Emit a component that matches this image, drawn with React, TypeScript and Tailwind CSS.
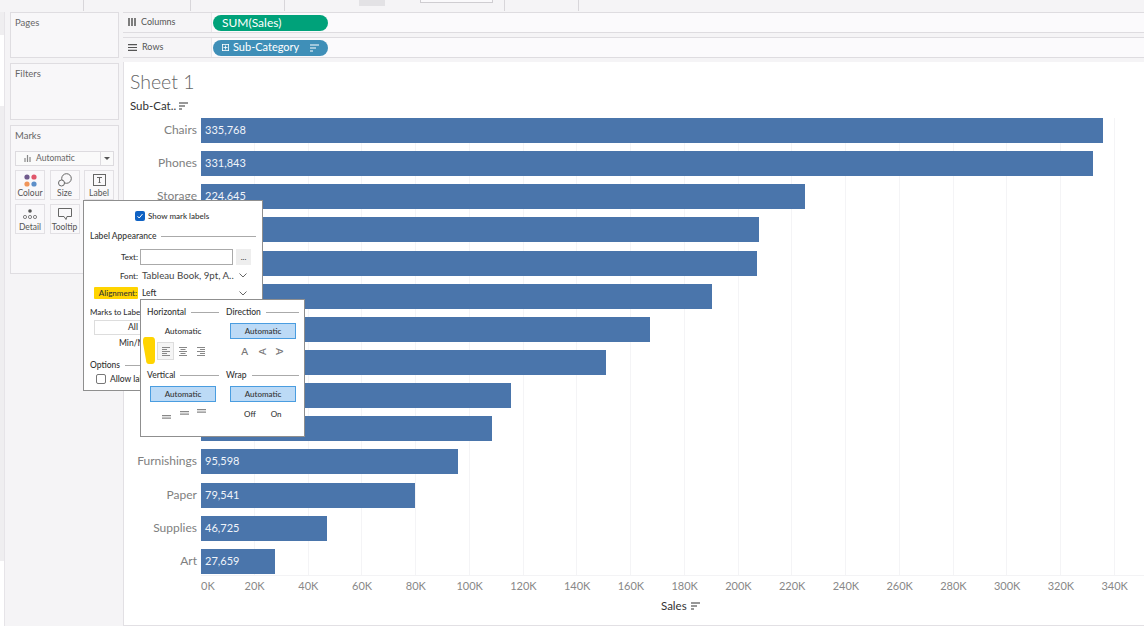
const BAR_SCALE = 53.75 / 20000;

const rows = [
  { name: 'Chairs', value: 335768, label: '335,768' },
  { name: 'Phones', value: 331843, label: '331,843' },
  { name: 'Storage', value: 224645, label: '224,645' },
  { name: '', value: 207600, label: '' },
  { name: '', value: 206800, label: '' },
  { name: '', value: 190000, label: '' },
  { name: '', value: 167100, label: '' },
  { name: '', value: 150700, label: '' },
  { name: '', value: 115400, label: '' },
  { name: '', value: 108300, label: '' },
  { name: 'Furnishings', value: 95598, label: '95,598' },
  { name: 'Paper', value: 79541, label: '79,541' },
  { name: 'Supplies', value: 46725, label: '46,725' },
  { name: 'Art', value: 27659, label: '27,659' },
];

const ticks = Array.from({ length: 18 }, (_, i) => `${i * 20}K`);

function SortIcon({ className = 'text-[#444]' }: { className?: string }) {
  return (
    <svg width="9" height="8" viewBox="0 0 9 8" className={className}>
      <path d="M0 1h9M0 4h6M0 7h3" stroke="currentColor" strokeWidth="1.2" />
    </svg>
  );
}

function Chevron() {
  return (
    <svg width="8" height="5" viewBox="0 0 8 5" className="text-[#666]">
      <path d="M.5.5 4 4 7.5.5" fill="none" stroke="currentColor" />
    </svg>
  );
}

function AlignIcon({ kind }: { kind: 'left' | 'center' | 'right' }) {
  const short = kind === 'left' ? 'M0 2.5h5M0 6.5h5' : kind === 'center' ? 'M1.5 2.5h5M1.5 6.5h5' : 'M3 2.5h5M3 6.5h5';
  return (
    <svg width="8" height="9" viewBox="0 0 8 9" className="text-[#888]">
      <path d={`M0 .5h8M0 4.5h8M0 8.5h8 ${short}`} stroke="currentColor" strokeWidth="1" />
    </svg>
  );
}

function VAlignIcon() {
  return (
    <svg width="9" height="4" viewBox="0 0 9 4" className="text-[#888]">
      <path d="M0 .7h9M0 3.2h9" stroke="currentColor" strokeWidth="1.3" />
    </svg>
  );
}

function SideCard({ title, className, children }: { title: string; className: string; children?: React.ReactNode }) {
  return (
    <div className={`border border-[#dfdde1] bg-[#f8f7f9] px-[4px] pt-[3px] ${className}`}>
      <div className="h-[13px] text-[9.5px] leading-[13px] text-[#666]">{title}</div>
      {children}
    </div>
  );
}

function MarkButton({ label, children }: { label: string; children: React.ReactNode }) {
  return (
    <div className="flex h-[30px] w-[30px] flex-col items-center border border-[#e2e0e4] bg-[#f9f8fa]">
      <div className="flex h-[17px] items-center pt-[1px]">{children}</div>
      <div className="whitespace-nowrap text-[8.5px] leading-[10px] text-[#555]">{label}</div>
    </div>
  );
}

function Shelf({ icon, label, children }: { icon: React.ReactNode; label: string; children: React.ReactNode }) {
  return (
    <div className="flex h-[21px] border-y border-[#dedce0] bg-[#fbfafc]">
      <div className="flex w-[89px] items-center gap-[5px] border-r border-[#e8e6ea] bg-[#f6f5f7] pb-[1px] pl-[5px] text-[9px] text-[#555]">
        {icon}
        {label}
      </div>
      <div className="flex items-center pl-[1px]">{children}</div>
    </div>
  );
}

function SectionHead({ title, className = '' }: { title: string; className?: string }) {
  return (
    <div className={`flex items-center gap-[5px] ${className}`}>
      <span className="whitespace-nowrap text-[8.5px] font-medium leading-[12px] text-[#333]">{title}</span>
      <div className="h-px flex-1 bg-[#aaa]" />
    </div>
  );
}

function BlueButton() {
  return (
    <div className="flex h-[16px] w-[66px] items-center justify-center border border-[#4a9de0] bg-[#bcdaf6] text-[8px] font-medium text-[#333]">
      Automatic
    </div>
  );
}

function FormRow({ label, highlight, className = 'h-[19px]', children }: { label: string; highlight?: boolean; className?: string; children: React.ReactNode }) {
  return (
    <div className={`flex items-center ${className}`}>
      <div className="flex w-[48px] justify-end">
        <span className={`whitespace-nowrap text-[8px] font-medium leading-[12px] text-[#333] ${highlight ? 'rounded-[1px] bg-[#ffd400] pr-[1px] pl-[5px]' : ''}`}>
          {label}
        </span>
      </div>
      {children}
    </div>
  );
}

function LabelPopover() {
  return (
    <div className="absolute top-[200px] left-[83px] h-[191px] w-[180px] border border-[#8f8f8f] bg-white px-[6px] text-[#333]">
      <div className="flex h-[29px] items-center pt-[1px] pl-[45px]">
        <div className="flex h-[10px] w-[10px] items-center justify-center rounded-[2px] bg-[#0f62c4]">
          <svg width="8" height="8" viewBox="0 0 8 8">
            <path d="M1.5 4.2 3.2 6l3.3-4" fill="none" stroke="white" strokeWidth="1" />
          </svg>
        </div>
        <span className="ml-[3px] text-[8px] font-medium">Show mark labels</span>
      </div>
      <SectionHead title="Label Appearance" className="h-[12px]" />
      <div className="mt-[5px]">
        <FormRow label="Text:">
          <div className="ml-[2px] h-[16px] w-[93px] border border-[#aaa]" />
          <div className="ml-[3px] flex h-[16px] w-[15px] items-center justify-center bg-[#eee] text-[8px] leading-none">...</div>
        </FormRow>
        <FormRow label="Font:">
          <div className="ml-[4px] flex w-[107px] items-center justify-between pr-[2px] text-[9.7px] text-[#444]">
            <span className="whitespace-nowrap">Tableau Book, 9pt, A..</span>
            <Chevron />
          </div>
        </FormRow>
        <FormRow label="Alignment:" highlight className="h-[16px]">
          <div className="ml-[4px] flex w-[107px] items-center justify-between pr-[2px] text-[8.5px] font-medium">
            <span>Left</span>
            <Chevron />
          </div>
        </FormRow>
      </div>
      <div className="mt-[5px] text-[8px] font-medium leading-[12px] whitespace-nowrap">Marks to Label</div>
      <div className="mt-[2px] ml-[4px] flex h-[15px] w-[60px] items-center justify-center border border-[#ddd] pl-[18px] text-[8.5px] font-medium">All</div>
      <div className="mt-[2px] pl-[29px] text-[8.5px] font-medium leading-[12px]">Min/M</div>
      <SectionHead title="Options" className="mt-[10px]" />
      <div className="mt-[2px] flex items-center pl-[6px]">
        <div className="h-[10px] w-[10px] rounded-[2px] border border-[#777]" />
        <span className="ml-[4px] text-[8.5px] font-medium">Allow lab</span>
      </div>
    </div>
  );
}

function AlignmentPopover() {
  return (
    <div className="absolute top-[299px] left-[140px] h-[138px] w-[165px] border border-[#8f8f8f] bg-white pt-[6px] pr-[5px] pl-[6px] text-[#333]">
      <div className="flex gap-[13px]">
        <div className="w-[66px]">
          <SectionHead title="Horizontal" className="w-[72px]" />
          <div className="mt-[5px] ml-[3px] flex h-[16px] w-[66px] items-center justify-center text-[8px] font-medium">Automatic</div>
          <div className="mt-[3px] ml-[10px] flex h-[18px] items-center">
            <div className="flex h-[18px] w-[17px] items-center justify-center border border-[#ddd] bg-[#f5f5f5]">
              <AlignIcon kind="left" />
            </div>
            <div className="flex w-[18px] justify-center"><AlignIcon kind="center" /></div>
            <div className="flex w-[17px] justify-center"><AlignIcon kind="right" /></div>
          </div>
        </div>
        <div className="flex-1">
          <SectionHead title="Direction" />
          <div className="mt-[5px] ml-[4px]"><BlueButton /></div>
          <div className="mt-[3px] ml-[10px] flex h-[18px] items-center text-[10px] font-semibold text-[#777]">
            <span className="w-[17.5px] text-center">A</span>
            <span className="w-[17.5px] -rotate-90 text-center">A</span>
            <span className="w-[17.5px] rotate-90 text-center">A</span>
          </div>
        </div>
      </div>
      <div className="mt-[9px] flex gap-[13px]">
        <div className="w-[66px]">
          <SectionHead title="Vertical" className="w-[72px]" />
          <div className="mt-[5px] ml-[3px]"><BlueButton /></div>
          <div className="mt-[4px] ml-[15px] flex h-[13px] items-start gap-[8.5px]">
            <div className="pt-[9px]"><VAlignIcon /></div>
            <div className="pt-[5px]"><VAlignIcon /></div>
            <div className="pt-[3px]"><VAlignIcon /></div>
          </div>
        </div>
        <div className="flex-1">
          <SectionHead title="Wrap" />
          <div className="mt-[5px] ml-[4px]"><BlueButton /></div>
          <div className="mt-[6px] ml-[18px] flex gap-[15px] text-[8px] font-medium leading-[12px]">
            <span>Off</span>
            <span>On</span>
          </div>
        </div>
      </div>
    </div>
  );
}

export default function App() {
  return (
    <div className="relative flex h-[626px] w-[1144px] flex-col overflow-hidden bg-[#f5f4f6] font-['Lato','Open_Sans',sans-serif]">
      <div className="flex h-[12px] shrink-0 pb-[1px]">
        <div className="w-[84px] border-r border-[#d8d6da]" />
        <div className="w-[107px] border-r border-[#d8d6da]" />
        <div className="w-[94px] border-r border-[#d8d6da]" />
        <div className="h-[6px] w-[74px]" />
        <div className="h-[6px] w-[26px] bg-[#e3e2e5]" />
        <div className="w-[35px]" />
        <div className="h-[3px] w-[73px] border-x border-b border-[#cfcdd1] bg-[#faf9fb]" />
        <div className="w-[12px] border-r border-[#d8d6da]" />
        <div className="w-[74px] border-r border-[#d8d6da]" />
      </div>

      <div className="flex flex-1">
        <div className="flex w-[5px] flex-col border-r border-[#e6e4e8] bg-white">
          <div className="h-[23px] bg-[#efeef0]" />
          <div className="h-[71px]" />
          <div className="h-[455px] bg-[#efeef0]" />
        </div>
        <div className="ml-[5px] flex w-[109px] shrink-0 flex-col gap-[5px]">
          <SideCard title="Pages" className="h-[46px]" />
          <SideCard title="Filters" className="h-[57px]" />
          <SideCard title="Marks" className="h-[149px]">
            <div className="mt-[9px] flex h-[15px] items-center border border-[#dddbdf] bg-[#fafafa] pl-[8px] text-[8.5px] text-[#666]">
              <svg width="7" height="7" viewBox="0 0 7 7" className="mr-[5px] text-[#888]">
                <path d="M1 3v4M3.5 0v7M6 2v5" stroke="currentColor" strokeWidth="1.2" />
              </svg>
              <span className="flex-1">Automatic</span>
              <div className="flex h-full w-[13px] items-center justify-center border-l border-[#dddbdf]">
                <div className="h-0 w-0 border-x-[3px] border-t-[3px] border-x-transparent border-t-[#555]" />
              </div>
            </div>
            <div className="mt-[4px] grid grid-cols-[30px_30px_30px] justify-between gap-y-[4px]">
              <MarkButton label="Colour">
                <svg width="13" height="13" viewBox="0 0 13 13">
                  <circle cx="3" cy="3" r="2.6" fill="#6f5a8c" />
                  <circle cx="10" cy="3" r="2.6" fill="#e0566b" />
                  <circle cx="3" cy="10" r="2.6" fill="#f0955a" />
                  <circle cx="10" cy="10" r="2.6" fill="#5d8fc9" />
                </svg>
              </MarkButton>
              <MarkButton label="Size">
                <svg width="14" height="14" viewBox="0 0 14 14" fill="none" stroke="#666">
                  <circle cx="8.5" cy="5.5" r="4.8" />
                  <circle cx="3.5" cy="10" r="3" fill="#f9f8fa" />
                </svg>
              </MarkButton>
              <MarkButton label="Label">
                <svg width="13" height="12" viewBox="0 0 13 12" fill="none" stroke="#666">
                  <rect x=".5" y=".5" width="12" height="11" />
                  <path d="M4 3.5h5M6.5 3.5v5M5.5 8.5h2" />
                </svg>
              </MarkButton>
              <MarkButton label="Detail">
                <svg width="14" height="11" viewBox="0 0 14 11" fill="none" stroke="#666" strokeWidth=".8">
                  <circle cx="7" cy="2" r="1.8" fill="#555" stroke="none" />
                  <circle cx="2" cy="8" r="1.6" />
                  <circle cx="7" cy="8" r="1.6" />
                  <circle cx="12" cy="8" r="1.6" />
                </svg>
              </MarkButton>
              <MarkButton label="Tooltip">
                <svg width="14" height="12" viewBox="0 0 14 12" fill="none" stroke="#666">
                  <path d="M.5.5h13v8H9l-1 3-2-3H.5z" />
                </svg>
              </MarkButton>
            </div>
          </SideCard>
        </div>

        <div className="ml-[4px] flex min-w-0 flex-1 flex-col">
          <div className="flex flex-col gap-[4px]">
            <Shelf
              label="Columns"
              icon={
                <svg width="8" height="8" viewBox="0 0 8 8" className="text-[#555]">
                  <path d="M1 0v8M4 0v8M7 0v8" stroke="currentColor" strokeWidth="1.5" />
                </svg>
              }
            >
              <div className="flex h-[16px] w-[115px] items-center rounded-full bg-[#00a27a] pl-[9px] text-[12px] text-white">SUM(Sales)</div>
            </Shelf>
            <Shelf
              label="Rows"
              icon={
                <svg width="9" height="7" viewBox="0 0 9 7" className="text-[#555]">
                  <path d="M0 .7h9M0 3.5h9M0 6.3h9" stroke="currentColor" strokeWidth="1.2" />
                </svg>
              }
            >
              <div className="flex h-[16px] w-[115px] items-center rounded-full bg-[#3f8fb8] pl-[9px] text-[11px] text-white">
                <svg width="7" height="7" viewBox="0 0 7 7" fill="none" stroke="white" strokeWidth=".8" className="mr-[4px]">
                  <rect x=".4" y=".4" width="6.2" height="6.2" />
                  <path d="M1.5 3.5h4M3.5 1.5v4" />
                </svg>
                <span>Sub-Category</span>
                <SortIcon className="ml-[11px] text-white" />
              </div>
            </Shelf>
          </div>

          <div className="mt-[4px] flex h-[564px] flex-col border-b border-l border-[#e2e0e4] bg-white">
            <div className="flex h-[34px] items-end pl-[6px] text-[19.5px] leading-[28px] font-light text-[#666]">Sheet 1</div>
            <div className="flex h-[18px] items-center pt-[2px] pl-[6px] text-[11.5px] text-[#333]">
              Sub-Cat..
              <SortIcon className="ml-[3px] text-[#333]" />
            </div>
            <div className="relative mt-[4px] h-[458px]">
              <div className="absolute inset-y-0 right-0 left-[77px] flex border-b border-[#f3f3f5]">
                {ticks.map((tick) => (
                  <div key={tick} className="w-[53.75px] shrink-0 border-r border-[#f4f4f6]" />
                ))}
              </div>
              <div className="relative flex flex-col">
                {rows.map((row, i) => (
                  <div key={i} className="flex h-[33.15px] items-start">
                    <div className="h-[25px] w-[73px] text-right text-[12px] leading-[24px] text-[#808080]">{row.name}</div>
                    <div
                      className="ml-[4px] h-[25px] bg-[#4a75ab] pl-[4px] text-[11px] leading-[24px] text-[#f0f4fa]"
                      style={{ width: row.value * BAR_SCALE }}
                    >
                      {row.label}
                    </div>
                  </div>
                ))}
              </div>
            </div>
            <div className="mt-[2px] ml-[50px] flex text-[11px] leading-[16px] text-[#888]">
              {ticks.map((tick, i) => (
                <div key={tick} className={`w-[53.75px] shrink-0 text-center ${i === 0 ? 'translate-x-[7px]' : ''}`}>
                  {tick}
                </div>
              ))}
            </div>
            <div className="mt-[4px] flex items-center gap-[4px] pl-[537px] text-[11.5px] leading-[16px] text-[#333]">
              Sales
              <SortIcon className="text-[#333]" />
            </div>
          </div>
        </div>
      </div>

      <LabelPopover />
      <AlignmentPopover />
      <svg width="12" height="27" viewBox="0 0 12 27" className="absolute top-[337px] left-[143px] text-[#ffd400]">
        <path d="M2 0h7q3 0 3 4v19q0 4-3 4H6q-3 0-3-4L0 6q-.5-6 2-6z" fill="currentColor" />
      </svg>
    </div>
  );
}
